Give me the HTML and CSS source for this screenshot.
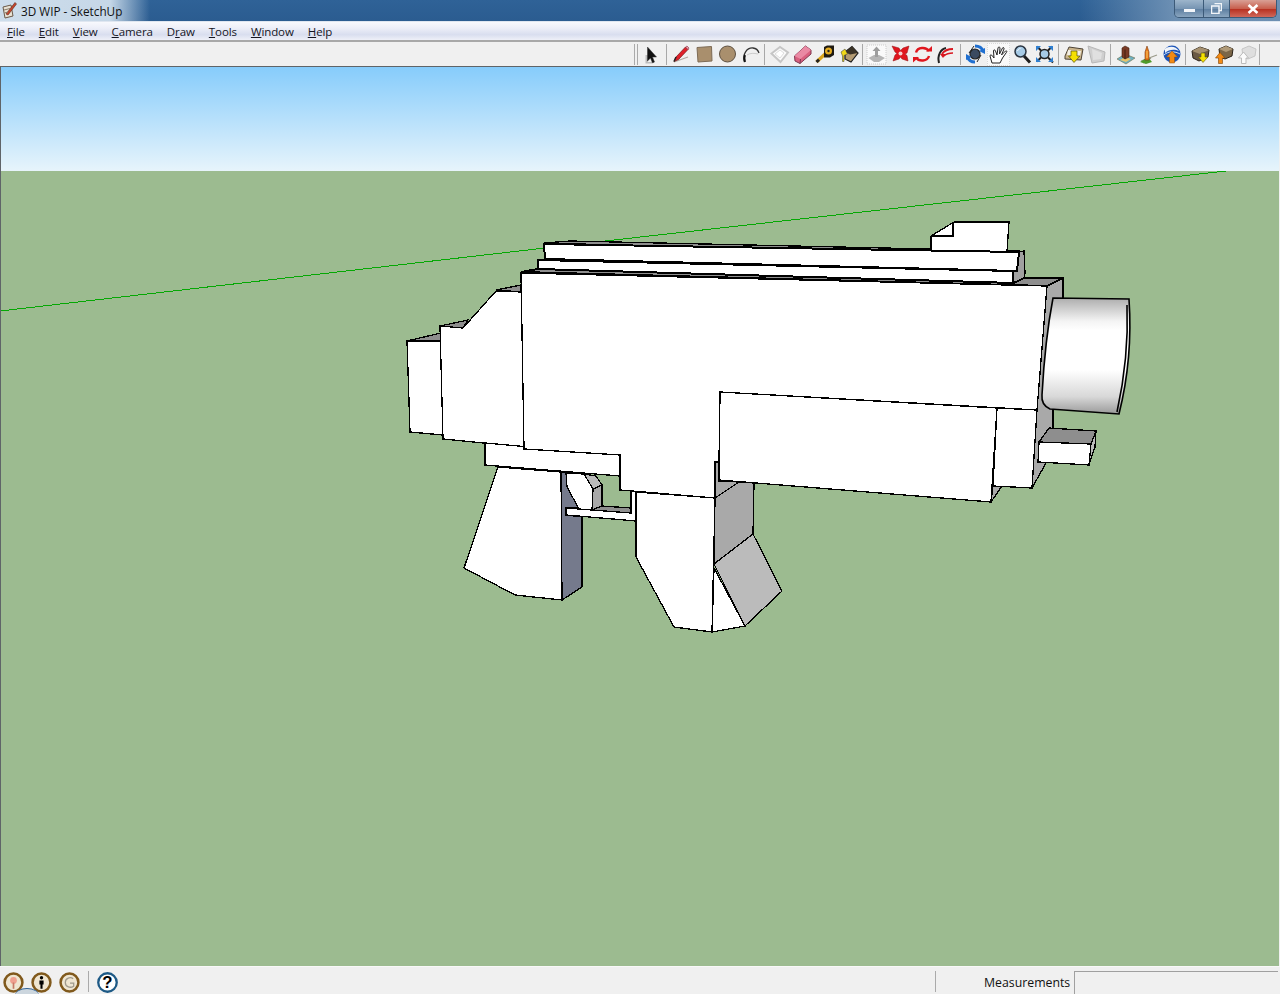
FILE: index.html
```html
<!DOCTYPE html>
<html lang="en">
<head>
<meta charset="utf-8">
<title>3D WIP - SketchUp</title>
<link rel="stylesheet" href="styles.css">
</head>
<body>
<div class="app">
  <header class="titlebar">
    <svg class="appicon" viewBox="0 0 16 18">
      <path d="M2 6 L10 4 L12 15 L4 17 Z" fill="#e8e2d4" stroke="#6b5a48"/>
      <path d="M5 13 L14 1.500 L15.500 3 L7 14 Z" fill="#c8452c" stroke="#5b2a1c" stroke-width=".6"/>
      <path d="M3 9 L9 7.500 M3.500 12 L7 11" stroke="#8a7a66"/>
    </svg>
    <span class="title">3D WIP - SketchUp</span>
    <div class="winbtns">
      <div class="winbtn min"><span class="minbar"></span></div>
      <div class="winbtn max">
        <svg class="maxglyph" viewBox="0 0 11 11"><path d="M3.500 .5 H10.500 V7.500 H8 M.5 3 H8 V10.500 H.5 Z" fill="none" stroke="#f2f5f9" stroke-width="1.500"/></svg>
      </div>
      <div class="winbtn close">
        <svg class="closeglyph" viewBox="0 0 12 9"><path d="M2 1 L10 8 M10 1 L2 8" stroke="#fff" stroke-width="2.400"/></svg>
      </div>
    </div>
  </header>

  <nav class="menubar">
    <span class="menu"><u>F</u>ile</span>
    <span class="menu"><u>E</u>dit</span>
    <span class="menu"><u>V</u>iew</span>
    <span class="menu"><u>C</u>amera</span>
    <span class="menu">D<u>r</u>aw</span>
    <span class="menu"><u>T</u>ools</span>
    <span class="menu"><u>W</u>indow</span>
    <span class="menu"><u>H</u>elp</span>
  </nav>

  <div class="toolbar">
    <span class="grip"></span>
    <svg class="ico" viewBox="0 0 23 23"><path d="M5.500 12 H8 V19 H12 V20.500 H5.500 Z" fill="#bdbdbd"/><path d="M7.500 4 V18 L10.500 15 L12.500 20 L14.500 19 L12.500 14 L16.500 14 Z" fill="#111" stroke="#333" stroke-width=".5"/></svg>
    <span class="sep"></span>
    <svg class="ico" viewBox="0 0 23 23"><path d="M4 19 L18 14" stroke="#b0a8a0" stroke-width="1.200"/><path d="M4 18.500 L6 14 L15.500 4 L18 6.500 L8.500 16.500 Z" fill="#e0202a" stroke="#701818" stroke-width=".7"/><path d="M15.500 4 L17 3 L19 5 L18 6.500 Z" fill="#f4a0b0" stroke="#803040" stroke-width=".6"/><path d="M4 18.500 L6 14" stroke="#222" stroke-width="1.500"/></svg>
    <svg class="ico" viewBox="0 0 23 23"><path d="M4 4.500 L18.500 3.500 L19 18 L5 19 Z" fill="#a98f6d" stroke="#7d6b55"/></svg>
    <svg class="ico" viewBox="0 0 23 23"><circle cx="11.500" cy="11" r="8" fill="#a98f6d" stroke="#5f5243"/></svg>
    <svg class="ico" viewBox="0 0 23 23"><path d="M5.500 19 C3 11 8 4.500 14 5 C17 5.300 19 7 20 10" fill="none" stroke="#333" stroke-width="1.300"/><path d="M6 19 C5 16 5 14 6 12" fill="none" stroke="#111" stroke-width="2"/><path d="M8 12 C11 10 15 10 19 11" fill="none" stroke="#ccc"/></svg>
    <span class="sep wide"></span>
    <svg class="ico" viewBox="0 0 23 23"><path d="M3.500 10.500 L12 4 L20 9.500 L12.500 19 Z" fill="#fbfbfb" stroke="#c6c6c6" stroke-width="2"/><path d="M7 11 L12 7 L16 10 L12 15 Z" fill="#fff" stroke="#ddd"/></svg>
    <svg class="ico" viewBox="0 0 23 23"><path d="M3.500 13 L14.500 3 L20 7 L20 11 L9 20.500 L4 18 Z" fill="#d9607f" stroke="#7f3850"/><path d="M3.500 13 L14.500 3 L20 7 L9.500 16 Z" fill="#ea8aa4"/><path d="M9.500 16 L9 20.500" stroke="#7f3850"/></svg>
    <svg class="ico" viewBox="0 0 23 23"><path d="M2.500 19 L11 11" stroke="#d9a41e" stroke-width="3.200"/><path d="M2.500 19 L5 16.700" stroke="#222" stroke-width="3"/><path d="M10 4 L13 2.500 H20 V12 L16 14.500 H10 Z" fill="#1f1a12"/><circle cx="14.500" cy="8" r="3.500" fill="#e5ad22"/><circle cx="14.500" cy="8" r="1.200" fill="#222"/></svg>
    <svg class="ico" viewBox="0 0 23 23"><path d="M8 9 L15 3.500 L21 10 L14 19 L8 16 Z" fill="#b39a72" stroke="#1c1c1c" stroke-width="1.200"/><path d="M8 9 L15 3.500 L21 10 L13 11.500 Z" fill="#3a3226"/><path d="M4 9 L8 6 L10.500 11 L7 12.500 V18.500 H5.500 V13 Z" fill="#f0d818" stroke="#333" stroke-width=".5"/></svg>
    <span class="sep narrow"></span>
    <svg class="ico" viewBox="0 0 23 23"><rect x="2" y="2" width="19" height="19" fill="#fafafa" stroke="#ccc" stroke-dasharray="1 1"/><path d="M3.500 15 L9 12 H14 L20 15 L14 19 H9 Z" fill="#b5b5b5"/><path d="M11.500 3.500 L15.500 8 H13 V14 H10 V8 H7.500 Z" fill="#9e9e9e"/></svg>
    <svg class="ico" viewBox="0 0 23 23"><path d="M4 3 L11 5 L12.500 7.500 L15 5 L21 3 L19 10 L17 11 L19 12.500 L20 18 L14 16 L12.500 14 L11 16 L5 18 L7 12 L9 10.500 L7 9 Z" fill="#e0161e" stroke="#8f1216" stroke-width=".5"/><circle cx="12.500" cy="10.500" r="2" fill="#f6d0d0"/></svg>
    <svg class="ico" viewBox="0 0 23 23"><path d="M5 9.500 C6.500 4 15 3.500 18 8" fill="none" stroke="#e0161e" stroke-width="2.400"/><path d="M15 8.500 H21 V3 Z" fill="#e0161e"/><path d="M18 13 C16.500 18.500 8 19 5 14.500" fill="none" stroke="#e0161e" stroke-width="2.400"/><path d="M8 14 H2 V19.500 Z" fill="#e0161e"/></svg>
    <svg class="ico" viewBox="0 0 23 23"><path d="M5 20 C3 12 7 6 12 5" fill="none" stroke="#222" stroke-width="2"/><path d="M8 11 C10 8 14 6 19 6" fill="none" stroke="#d81820" stroke-width="1.800"/><path d="M10 13 C12 11 15 10 19 10" fill="none" stroke="#d81820" stroke-width="1.300"/><path d="M6 11 L12 11 L9 15 Z" fill="#d81820"/></svg>
    <span class="sep"></span>
    <svg class="ico" viewBox="0 0 23 23"><circle cx="11" cy="11" r="5" fill="#3a4a60" stroke="#222" stroke-width="1.200"/><path d="M11 3 C15 3 18 5 19 8" fill="none" stroke="#1f6fd0" stroke-width="3"/><path d="M11 19 C7 19 4.500 17 3.500 14" fill="none" stroke="#1f6fd0" stroke-width="3"/><path d="M15 8 L21 11 L21 5 Z" fill="#1f6fd0"/><path d="M7.500 14 L2 11 L2 17 Z" fill="#1f6fd0"/><path d="M5 10 L10 3 M17 12 L13 19" stroke="#222"/></svg>
    <div class="pressed"><svg class="ico" viewBox="0 0 23 23"><path d="M5 20 L3 13 C3 11.500 4.500 11.500 5.500 13 L7 15 L6.500 8 C6.500 6.500 8 6.500 8.500 8 L10 12 L11 5 C11.300 3.500 13 3.800 13 5 L12.500 11 L15.500 5 C16 4 17.500 4.500 17 6 L14.500 12 L18.500 8 C19.500 7.300 20.300 8.300 19.500 9.300 L15.500 15 L13 20 Z" fill="#fff" stroke="#222" stroke-width="1"/></svg></div>
    <svg class="ico" viewBox="0 0 23 23"><path d="M14 13 L20 19.500" stroke="#1e1e1e" stroke-width="3"/><circle cx="10.500" cy="8.500" r="5.500" fill="#a7cbe6" stroke="#2a3440" stroke-width="1.500"/><path d="M7.500 8 C8 6.500 9 5.500 10.500 5.500" stroke="#f4f8fb" fill="none"/></svg>
    <svg class="ico" viewBox="0 0 23 23"><circle cx="11.500" cy="11" r="4.500" fill="#a7cbe6" stroke="#222" stroke-width="1.500"/><path d="M15 14.500 L20 19.500 M8 7.500 L4 3.500 M15 7.500 L19 3.500 M8 14.500 L4 18.500" stroke="#1e1e1e" stroke-width="2"/><path d="M3 3 H8 L3 8 Z M20 3 H15 L20 8 Z M3 19 H8 L3 14 Z M20 19 H15 L20 14 Z" fill="#2f7fd0"/></svg>
    <span class="sep wide"></span>
    <svg class="ico" viewBox="0 0 23 23"><path d="M3 13 L7 4 L21 6 L19 17 L3 16 Z" fill="#c9b48c" stroke="#4d4336"/><path d="M6 7 L19 8 L18 13 L5 12 Z" fill="#f2efe6"/><path d="M9 8 H15 V13 H18 L12 19.500 L6.500 13 H9 Z" fill="#f4e000" stroke="#56500c" stroke-width=".7"/></svg>
    <svg class="ico" viewBox="0 0 23 23"><path d="M3 3 L20 9 L19 18 L7 20 Z" fill="#cfcfcf" stroke="#b7b7b7"/><path d="M7 6 L17 10 L16 16 L8 17 Z" fill="#e0e0e0"/></svg>
    <span class="sep wide"></span>
    <svg class="ico" viewBox="0 0 23 23"><path d="M3 16 L11 11 L21 15 L12 21 Z" fill="#6cb0c4" stroke="#6e6e4a" stroke-width=".6"/><path d="M6 17 L11 14 L17 16 L12 19 Z" fill="#e7c46a"/><path d="M8 5 L11 3 L15 5 V14 L11 16 L8 14 Z" fill="#7a3b26" stroke="#41200f" stroke-width=".6"/><path d="M11 6.500 V16" stroke="#41200f"/></svg>
    <svg class="ico" viewBox="0 0 23 23"><path d="M4 18 L20 12 M6 20 L14 15" stroke="#9a9a8a" stroke-width="1.200"/><path d="M3 19 L11 14 L15 19 L9 21 Z" fill="#4f9a2a"/><path d="M8 9 L10 3 L12 9 V17 H8 Z" fill="#ea7a1c" stroke="#7a3b10" stroke-width=".6"/><path d="M10 8 V15" stroke="#f6c860"/></svg>
    <svg class="ico" viewBox="0 0 23 23"><circle cx="12" cy="11" r="8.500" fill="#1d55b8"/><path d="M5 6 C9 2.500 16 3 19 8 C15 6 9 6 5 10 Z" fill="#f2f6fb"/><path d="M4 12 C8 8 15 8 20 11" stroke="#cfe0f4" fill="none"/><path d="M12 8 L17.500 14 H14.500 V20 H9.500 V14 H6.500 Z" fill="#f28a14" stroke="#8f4b08" stroke-width=".5"/></svg>
    <span class="sep wide"></span>
    <svg class="ico" viewBox="0 0 23 23"><path d="M3 8 L11 4 L20 7 L19 14 L10 18 L4 15 Z" fill="#6b5a45" stroke="#2a2218"/><path d="M3 8 L11 11 L20 7 L11 4 Z" fill="#a59070"/><path d="M12 10 H16 V14 H19 L14 19.500 L9.500 14 H12 Z" fill="#f4e000" stroke="#5d560c" stroke-width=".6"/></svg>
    <svg class="ico" viewBox="0 0 23 23"><path d="M7 6 L14 3 L21 6 L20 13 L13 16 L8 14 Z" fill="#7b6648" stroke="#2a2218"/><path d="M7 6 L14 9 L21 6 L14 3 Z" fill="#b09a78"/><path d="M8 9.500 L13 15 H10.500 V20.500 H6.500 V15 H3.500 Z" fill="#f28a14" stroke="#7a4208" stroke-width=".6"/></svg>
    <svg class="ico" viewBox="0 0 23 23"><path d="M7 6 L14 3 L21 6 L20 13 L13 16 L8 14 Z" fill="#dedede" stroke="#c6c6c6"/><path d="M8.500 9 L13.500 15 H11 V20.500 H6.500 V15 H3.500 Z" fill="#fbfbfb" stroke="#bbb"/></svg>
    <span class="sep last"></span>
  </div>

  <main class="viewport">
    <svg class="scene" viewBox="1 67 1278 899">
      <defs>
        <linearGradient id="sky" x1="0" y1="0" x2="0" y2="1">
          <stop offset="0" stop-color="#86ccfb"/>
          <stop offset="1" stop-color="#e7f4fb"/>
        </linearGradient>
        <linearGradient id="barrel" x1="0" y1="0" x2="0" y2="1">
          <stop offset="0" stop-color="#adadad"/>
          <stop offset=".2" stop-color="#f4f4f4"/>
          <stop offset=".28" stop-color="#fff"/>
          <stop offset=".62" stop-color="#fff"/>
          <stop offset=".85" stop-color="#d8d8d8"/>
          <stop offset="1" stop-color="#9a9a9a"/>
        </linearGradient>
      </defs>
      <rect class="ground" x="0" y="171" width="1280" height="800"/>
      <rect x="0" y="67" width="1280" height="104" fill="url(#sky)"/>
      <path class="axis" d="M0 311 L545 248 M605 241 L1226 171"/>
      <g class="model">
        <!-- stock -->
        <polygon class="dark" points="407,341 441,333 441,341"/>
        <polygon class="face" points="407,341 441,341 443,435 410,432"/>
        <polygon class="dark" points="440,326 468,320 463,328"/>
        <polygon class="dark" points="496,290 521,285 521,292"/>
        <polygon class="face" points="440,326 463,328 496,291 522,292 524,447 443,439"/>
        <!-- grip -->
        <polygon class="side" points="561,472 566,472 567,487 579,508 566,508 566,515 582,517 582,587 562,600"/>
        <polygon class="face" points="498,467 561,472 562,600 515,595 464,568"/>
        <polygon class="lite" points="584,474 596,476 602,485 593,489"/>
        <polygon class="mid" points="593,489 602,485 602,507 592,510"/>
        <polygon class="face" points="566,473 584,474 593,489 592,510 579,509 567,487"/>
        <polygon class="dark" points="592,510 602,506 631,508 631,513"/>
        <polygon class="face" points="566,508 631,513 631,491 636,491 636,521 566,515"/>
        <polygon class="face" points="485,443 620,455 620,476 485,465"/>
        <!-- magazine -->
        <polygon class="mid" points="739,482 754,483 753,534 714,564 715,498"/>
        <polygon class="lite" points="753,534 782,591 745,626 714,564"/>
        <polygon class="face" points="714,568 745,626 712,632"/>
        <polygon class="face" points="636,492 715,498 712,632 674,627 636,557"/>
        <!-- rails and sight -->
        <polygon class="dark" points="544,243 570,241 1019,251 1014,256"/>
        <polygon class="face" points="931,236 954,222 1009,222 1007,252 931,251"/>
        <path class="thin" d="M953,222 V236 H931"/>
        <polygon class="side2" points="1019,252 1024,251 1025,273 1024,278 1014,283 1013,271 1017,271"/>
        <polygon class="face heavy" points="538,260 1013,271 1013,283 538,269"/>
        <polygon class="face heavy" points="544,244 1019,252 1017,271 545,259"/>
        <!-- receiver -->
        <polygon class="mid" points="1047,286 1063,278 1063,300 1053,350 1053,427 1046,463 1032,488 1037,410"/>
        <polygon class="dark heavy" points="521,272 538,269 1014,283 1024,278 1063,278 1047,286"/>
        <polygon class="face" points="521,273 1047,286 1037,410 720,392 719,462 715,462 715,498 620,490 620,455 524,449"/>
        <polygon class="mid" points="715,462 719,462 719,481 739,482 715,498"/>
        <!-- lower block -->
        <polygon class="mid" points="991,502 1002,486 993,485"/>
        <polygon class="face" points="997,408 1037,410 1032,488 993,486"/>
        <polygon class="face" points="720,392 997,408 991,502 719,480"/>
        <!-- front nub -->
        <polygon class="dark" points="1039,442 1049,428 1096,431 1091,444"/>
        <polygon class="lite" points="1091,444 1096,431 1095,447 1089,465"/>
        <polygon class="face" points="1039,442 1091,444 1089,465 1038,462"/>
        <!-- barrel -->
        <path d="M1053,298 L1129,299 Q1133,358 1119,414 L1050,409 Q1041,405 1042,395 Q1045,340 1053,298 Z" fill="url(#barrel)" class="smooth"/>
        <path class="smooth" d="M1127,305 Q1129,358 1117,412" fill="none"/>
      </g>
    </svg>
  </main>

  <footer class="statusbar">
    <svg class="stat" viewBox="0 0 20 20"><circle cx="10" cy="10" r="8.500" fill="#efe6d2" stroke="#80591c" stroke-width="2.400"/><circle cx="10" cy="8" r="3.200" fill="#f0a090"/><path d="M10 10 V16" stroke="#c77a66" stroke-width="1.600"/></svg>
    <svg class="stat" viewBox="0 0 20 20"><circle cx="10" cy="10" r="8.500" fill="#efe6d2" stroke="#80591c" stroke-width="2.400"/><circle cx="10" cy="5.500" r="1.600"/><path d="M8 8 H12 V12 H11 V16 H9 V12 H8 Z"/></svg>
    <svg class="stat" viewBox="0 0 20 20"><circle cx="10" cy="10" r="8.500" fill="#efe6d2" stroke="#80591c" stroke-width="2.400"/><path d="M13.500 6.500 C11 4.500 6 5.500 6 10 C6 14.500 11 15.500 14 13.500 V10.500 H10.500" fill="none" stroke="#a09a8c" stroke-width="1.200"/></svg>
    <span class="statsep"></span>
    <svg class="helpico" viewBox="0 0 20 20"><circle cx="10" cy="10" r="8.800" fill="#fff" stroke="#1e5a86" stroke-width="2.200"/><text class="helptext" x="10" y="15" text-anchor="middle">?</text></svg>
    <span class="statsep far"></span>
    <span class="mlabel">Measurements</span>
    <span class="minput"></span>
    <span class="hint"></span>
  </footer>
</div>
</body>
</html>
```

FILE: styles.css
```css
html, body {
  margin: 0;
  padding: 0;
  height: 100%;
  overflow: hidden;
}
.app {
  position: relative;
  display: flex;
  flex-direction: column;
  height: 994px;
  background: #f0f0f0;
  font-family: "Open Sans", "Liberation Sans", sans-serif;
  color: #111;
  overflow: hidden;
}

/* title bar */
.titlebar {
  display: flex;
  align-items: flex-start;
  height: 21px;
  flex: none;
  background:
    linear-gradient(90deg, rgba(214,228,240,.95) 0, rgba(214,228,240,.9) 110px, rgba(214,228,240,0) 150px),
    linear-gradient(90deg, rgba(120,150,185,0) 1080px, rgba(130,160,190,.75) 1175px),
    linear-gradient(180deg, #2f6297 0, #2b5c90 100%);
  border-bottom: 1px solid #dfe6f0;
  box-sizing: content-box;
}
.appicon {
  width: 16px;
  height: 18px;
  margin: 1px 0 0 1px;
  flex: none;
}
.title {
  margin: 3px 0 0 4px;
  font-size: 11.750px;
  line-height: 16px;
  color: #111;
}
.winbtns {
  display: flex;
  margin-left: auto;
  margin-right: 3px;
  height: 17px;
  border: 1px solid #3c5a78;
  border-top: 0;
  border-radius: 0 0 5px 5px;
  overflow: hidden;
}
.winbtn {
  display: flex;
  align-items: center;
  justify-content: center;
  height: 17px;
}
.min {
  width: 28px;
  background: linear-gradient(180deg, #9db5cb 0, #7795b3 50%, #5f80a2 55%, #8aa5bf 100%);
  border-right: 1px solid #3c5a78;
}
.max {
  width: 25px;
  background: linear-gradient(180deg, #9db5cb 0, #7795b3 50%, #5f80a2 55%, #8aa5bf 100%);
  border-right: 1px solid #3c5a78;
}
.close {
  width: 46px;
  background: linear-gradient(180deg, #d9a095 0, #c8604e 50%, #b83222 55%, #d0685a 100%);
}
.minbar {
  display: block;
  width: 11px;
  height: 3px;
  margin-top: 4px;
  background: #f2f5f9;
}
.maxglyph {
  width: 11px;
  height: 11px;
}
.closeglyph {
  width: 14px;
  height: 10px;
}

/* menu */
.menubar {
  display: flex;
  align-items: center;
  gap: 14px;
  flex: none;
  height: 17px;
  padding: 1px 0 0 7px;
  background: linear-gradient(180deg, #f8f9fd 0, #eceef8 35%, #d9deef 70%, #eef0f8 100%);
  border-bottom: 2px solid #a8a8a8;
}
.menu {
  font-size: 11.500px;
  letter-spacing: -0.1px;
  line-height: 17px;
  color: #15151f;
}

/* toolbar */
.toolbar {
  display: flex;
  align-items: flex-start;
  flex: none;
  height: 24px;
  padding: 1px 0 0 634px;
  box-sizing: border-box;
  background: #f0f0f0;
}
.grip {
  flex: none;
  width: 4px;
  height: 21px;
  margin: 1px 2px 0 0;
  box-sizing: border-box;
  border-left: 1px solid #aaa;
  border-right: 1px solid #aaa;
}
.ico {
  display: block;
  flex: none;
  width: 23px;
  height: 23px;
}
.sep {
  flex: none;
  width: 1px;
  height: 21px;
  margin: 1px 3px 0 3px;
  background: #a8a8a8;
}
.sep.wide {
  margin: 1px 3px 0 2px;
}
.sep.narrow {
  margin: 1px 2px 0 2px;
}
.sep.last {
  margin: 1px 0 0 1px;
}
.pressed {
  flex: none;
  width: 23px;
  height: 23px;
  background: #f9f9f9;
  outline: 1px dotted #d8d8d8;
  outline-offset: -1px;
}

/* viewport */
.viewport {
  flex: 1;
  min-height: 0;
  border-top: 1px solid #5f6468;
  border-left: 1px solid #5f6468;
  border-right: 1px solid #f0f0f0;
}
.scene {
  display: block;
  width: 1278px;
  height: 899px;
}
.ground {
  fill: #9cbb90;
}
.axis {
  fill: none;
  stroke: #04a804;
  stroke-width: 1;
  shape-rendering: crispEdges;
}
.model polygon,
.model .thin {
  stroke: #000;
  stroke-width: 1.300;
  stroke-linejoin: miter;
  shape-rendering: crispEdges;
}
.model .thin {
  fill: none;
}
.model polygon.heavy {
  stroke-width: 2;
}
.model .smooth {
  stroke: #000;
  stroke-width: 1.600;
}
.face {
  fill: #fff;
}
.dark {
  fill: #8e8e8e;
}
.mid {
  fill: #a9a9a9;
}
.lite {
  fill: #bbb;
}
.side {
  fill: #757a8c;
}
.side2 {
  fill: #a0a0a0;
}

/* status bar */
.statusbar {
  display: flex;
  align-items: flex-start;
  flex: none;
  height: 28px;
  padding: 0 0 0 3px;
  box-sizing: border-box;
  border-top: 1px solid #f8f8f8;
  background: #f0f0f0;
}
.stat {
  flex: none;
  width: 21px;
  height: 21px;
  margin: 5px 7px 0 0;
}
.statsep {
  flex: none;
  width: 1px;
  height: 21px;
  margin: 4px 0 0 1px;
  background: #aaa;
}
.helpico {
  flex: none;
  width: 21px;
  height: 21px;
  margin: 5px 0 0 8px;
}
.helptext {
  font-family: "Liberation Sans", sans-serif;
  font-size: 16px;
  font-weight: 700;
  fill: #000;
}
.statsep.far {
  margin-left: 817px;
}
.mlabel {
  flex: none;
  margin: 8px 0 0 48px;
  font-size: 12.300px;
  line-height: 16px;
  color: #111;
}
.minput {
  flex: 1;
  height: 24px;
  margin: 4px 2px 0 4px;
  box-sizing: border-box;
  border-top: 1px solid #a0a0a0;
  border-left: 1px solid #a0a0a0;
}
.hint {
  position: absolute;
  left: 15px;
  bottom: -9px;
  width: 24px;
  height: 14px;
  border-radius: 50%;
  background: #ccd6de;
  border-top: 1px solid #2f6297;
}
```
